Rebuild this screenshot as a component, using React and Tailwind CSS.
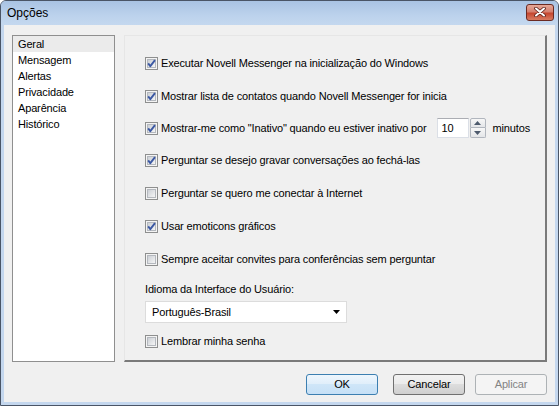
import React from 'react';

const FONT = "font-['Liberation_Sans',Arial,sans-serif]";

function Check({ checked }) {
    return (
        <svg width="13" height="13" viewBox="0 0 13 13" className="shrink-0">
            <defs>
                <linearGradient id="cbfill" x1="0" y1="0" x2="1" y2="1">
                    <stop offset="0" stopColor="#c9cdd3" />
                    <stop offset="1" stopColor="#f8f8f8" />
                </linearGradient>
            </defs>
            <rect x="0.5" y="0.5" width="12" height="12" fill="#f4f4f4" stroke="#8e8f8f" />
            <rect x="2.5" y="2.5" width="8" height="8" fill="url(#cbfill)" stroke="#b4b8be" />
            {checked && (
                <path d="M3.2 6.4 L5.3 9.2 L10 3.2" fill="none" stroke="#3b58a3" strokeWidth="1.9" strokeLinejoin="round" />
            )}
        </svg>
    );
}

function CheckRow({ checked, label, h = 'h-[33px]', children }) {
    return (
        <div className={`flex items-center ${h}`}>
            <Check checked={checked} />
            <span className="ml-[3px] whitespace-nowrap">{label}</span>
            {children}
        </div>
    );
}

export default function App() {
    const pages = ['Geral', 'Mensagem', 'Alertas', 'Privacidade', 'Aparência', 'Histórico'];

    return (
        <div className={`${FONT} w-[559px] h-[406px] flex flex-col rounded-t-[6px] border border-[#4a5566] bg-[#c4d7ee] text-[11px] tracking-[-0.15px] text-black`}>
            {/* Title bar */}
            <div className="h-[24px] shrink-0 flex items-center justify-between rounded-t-[5px] bg-[linear-gradient(to_bottom,#a9c3e3,#bcd2ec_60%,#c4d8ef)] pl-[6px] pr-[4px]">
                <span className="text-[12px] tracking-normal text-black">Opções</span>
                <div className="w-[28px] h-[17px] mb-[2px] flex items-center justify-center rounded-[3px] border border-[#6b2a22] bg-[linear-gradient(to_bottom,#e6a898_0%,#d5806f_45%,#c5462f_55%,#d87c62_100%)]">
                    <svg width="12" height="10" viewBox="0 0 12 10">
                        <path d="M2 1.5 L10 8.5 M10 1.5 L2 8.5" stroke="#5a1f18" strokeWidth="3.6" strokeLinecap="round" />
                        <path d="M2 1.5 L10 8.5 M10 1.5 L2 8.5" stroke="#ffffff" strokeWidth="2" strokeLinecap="round" />
                    </svg>
                </div>
            </div>

            {/* Client area */}
            <div className="flex-1 mx-[3px] mb-[3px] flex flex-col bg-[#f0f0f0] pt-[10px] pl-[8px] pr-[8px] pb-[7px]">
                <div className="flex gap-[9px] h-[327px]">
                    {/* Page list */}
                    <div className="w-[103px] border border-[#8f8f8f] bg-white pt-0">
                        {pages.map((p, i) => (
                            <div
                                key={p}
                                className={`h-[16px] flex items-center pl-[5px] ${i === 0 ? 'bg-[#ebebeb]' : ''}`}
                            >
                                {p}
                            </div>
                        ))}
                    </div>

                    {/* Settings panel */}
                    <div className="w-[423px] border-t border-l border-[#e6e6e6] border-r-2 border-b-2 border-r-[#7a7a7a] border-b-[#7a7a7a] pt-[11px] pl-[20px]">
                        <CheckRow checked label="Executar Novell Messenger na inicialização do Windows" />
                        <CheckRow checked h="h-[32px]" label="Mostrar lista de contatos quando Novell Messenger for inicia" />
                        <CheckRow checked h="h-[32px]" label='Mostrar-me como "Inativo" quando eu estiver inativo por'>
                            <div className="ml-[10px] flex h-[20px]">
                                <div className="w-[32px] h-[20px] flex items-center pl-[4px] bg-white border border-[#dbdfe6] border-t-[#abadb3]">
                                    10
                                </div>
                                <div className="w-[16px] h-[20px] flex flex-col ml-[1px]">
                                    <div className="h-[10px] flex items-center justify-center rounded-t-[2px] border border-[#b1b6be] bg-[linear-gradient(to_bottom,#f7f7f7,#e4e6e9)]">
                                        <svg width="7" height="4" viewBox="0 0 7 4"><path d="M0 4 L3.5 0 L7 4 Z" fill="#4d5a6d" /></svg>
                                    </div>
                                    <div className="h-[10px] flex items-center justify-center rounded-b-[2px] border border-t-0 border-[#b1b6be] bg-[linear-gradient(to_bottom,#f7f7f7,#e4e6e9)]">
                                        <svg width="7" height="4" viewBox="0 0 7 4"><path d="M0 0 L3.5 4 L7 0 Z" fill="#4d5a6d" /></svg>
                                    </div>
                                </div>
                            </div>
                            <span className="ml-[7px]">minutos</span>
                        </CheckRow>
                        <CheckRow checked label="Perguntar se desejo gravar conversações ao fechá-las" />
                        <CheckRow label="Perguntar se quero me conectar à Internet" />
                        <CheckRow checked label="Usar emoticons gráficos" />
                        <CheckRow label="Sempre aceitar convites para conferências sem perguntar" />

                        <div className="mt-[6px] h-[14px] flex items-center">Idioma da Interface do Usuário:</div>
                        <div className="mt-[5px] w-[202px] h-[22px] flex items-center justify-between bg-white border border-[#dcdcdc] pl-[6px] pr-[6px]">
                            <span>Português-Brasil</span>
                            <svg width="7" height="4" viewBox="0 0 7 4"><path d="M0 0 L7 0 L3.5 4 Z" fill="#000" /></svg>
                        </div>
                        <div className="mt-[12px] flex items-center h-[13px]">
                            <Check />
                            <span className="ml-[3px]">Lembrar minha senha</span>
                        </div>
                    </div>
                </div>

                {/* Buttons */}
                <div className="mt-[12px] flex justify-end h-[21px]">
                    <button className="w-[72px] h-[21px] rounded-[3px] border border-[#3c7fb1] bg-[linear-gradient(to_bottom,#eef6fd_0%,#dfeefa_50%,#cfe6f8_50%,#c6e0f6_100%)]">
                        OK
                    </button>
                    <button className="ml-[15px] w-[72px] h-[21px] rounded-[3px] border border-[#707070] bg-[linear-gradient(to_bottom,#f2f2f2_0%,#ebebeb_50%,#dddddd_50%,#cfcfcf_100%)]">
                        Cancelar
                    </button>
                    <button disabled className="ml-[10px] w-[72px] h-[21px] rounded-[3px] border border-[#adb2b5] bg-[#f4f4f4] text-[#838383]">
                        Aplicar
                    </button>
                </div>
            </div>
        </div>
    );
}
